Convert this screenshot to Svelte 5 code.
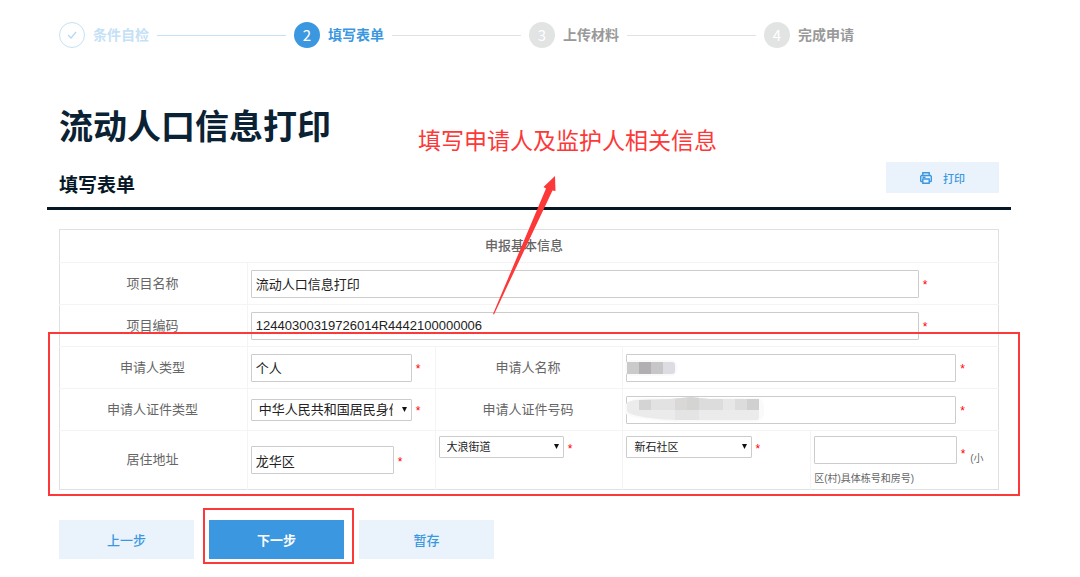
<script>
  const steps = [
    { no: 1, label: '条件自检', state: 'done' },
    { no: 2, label: '填写表单', state: 'current' },
    { no: 3, label: '上传材料', state: 'todo' },
    { no: 4, label: '完成申请', state: 'todo' }
  ];

  const idTypes = ['中华人民共和国居民身份证', '护照'];
  const streets = ['大浪街道', '龙华街道'];
  const communities = ['新石社区', '大浪社区'];

  let form = $state({
    name: '流动人口信息打印',
    code: '12440300319726014R4442100000006',
    type: '个人',
    applicant: '',
    idType: idTypes[0],
    idNumber: '',
    district: '龙华区',
    street: streets[0],
    community: communities[0],
    room: ''
  });
</script>

{#snippet caret()}
  <svg class="caret" viewBox="0 0 6 6" aria-hidden="true"><path d="M0 0h6L3 6z" fill="#111" /></svg>
{/snippet}

<div class="page">
  <ol class="steps">
    {#each steps as step}
      <li class={step.state}>
        <span class="circle">
          {#if step.state === 'done'}
            <svg width="10" height="8" viewBox="0 0 10 8" aria-hidden="true">
              <path d="M1 4l3 3 5-6" fill="none" stroke="currentColor" stroke-width="1.2" />
            </svg>
          {:else}
            {step.no}
          {/if}
        </span>
        <span class="step-label">{step.label}</span>
      </li>
    {/each}
  </ol>

  <header>
    <h1>流动人口信息打印</h1>
    <div class="subhead">
      <h2>填写表单</h2>
      <button type="button" class="btn print">
        <svg width="12" height="12" viewBox="0 0 12 12" fill="none" stroke="currentColor" stroke-width="1.4" aria-hidden="true">
          <path d="M2.8 3.5V.8h6.4v2.7M2.8 9.5H1.2L.7 9V4.5l.8-1h9l.8 1V9l-.5.5H9.2" />
          <path d="M2.8 7h6.4v4.3H2.8zM2.5 5.3h3" />
        </svg>
        打印
      </button>
    </div>
  </header>

  <div class="table-wrapper">
    <table>
      <thead>
        <tr><th colspan="5">申报基本信息</th></tr>
      </thead>
      <tbody>
        <tr>
          <td class="label"><label for="name">项目名称</label></td>
          <td colspan="4">
            <div class="field"><input id="name" bind:value={form.name} /><i>*</i></div>
          </td>
        </tr>
        <tr>
          <td class="label"><label for="code">项目编码</label></td>
          <td colspan="4">
            <div class="field"><input id="code" bind:value={form.code} /><i>*</i></div>
          </td>
        </tr>
        <tr>
          <td class="label"><label for="type">申请人类型</label></td>
          <td>
            <div class="field"><input id="type" bind:value={form.type} /><i>*</i></div>
          </td>
          <td class="label"><label for="applicant">申请人名称</label></td>
          <td colspan="2">
            <div class="field">
              <input id="applicant" bind:value={form.applicant} /><i>*</i>
              <svg class="mask" width="54" height="16" viewBox="0 0 54 16" aria-hidden="true">
                <rect width="52" height="16" rx="6" fill="#fafafa" />
                <path d="M2 2h12v12H2z" fill="#cbcacb" />
                <path d="M14 2h12v12H14z" fill="#b1afb2" />
                <path d="M26 2h12v12H26z" fill="#c6c5c7" />
                <path d="M38 2h9q3 0 3 3v6q0 3-3 3h-9z" fill="#dddce2" />
              </svg>
            </div>
          </td>
        </tr>
        <tr>
          <td class="label"><label for="id-type">申请人证件类型</label></td>
          <td>
            <div class="field">
              <span class="select">
                <select id="id-type" bind:value={form.idType}>
                  {#each idTypes as item}<option>{item}</option>{/each}
                </select>
                {@render caret()}
              </span>
              <i>*</i>
            </div>
          </td>
          <td class="label"><label for="id-number">申请人证件号码</label></td>
          <td colspan="2">
            <div class="field">
              <input id="id-number" bind:value={form.idNumber} /><i>*</i>
              <svg class="mask" width="142" height="26" viewBox="0 0 142 26" aria-hidden="true">
                <defs>
                  <clipPath id="blob">
                    <path d="M2 6q5-3 12-3l32-1 20-2 18 2h50v19q0 2-4 2H50q-24-1-36-4Q3 17 2 14z" />
                  </clipPath>
                </defs>
                <path d="M0 8q4-6 15-7h118q6 2 6 8v9q-2 6-10 7H50Q4 22 0 16z" fill="#fafafa" />
                <g clip-path="url(#blob)">
                  <path d="M0 0h142v26H0z" fill="#ebebec" />
                  <path d="M2 0h12v13H2z" fill="#ececed" />
                  <path d="M14 0h12v13H14z" fill="#d5d4d5" />
                  <path d="M26 0h24v13H26z" fill="#e2e2e2" />
                  <path d="M50 0h12v13H50z" fill="#d9d8d7" />
                  <path d="M62 0h12v13H62z" fill="#d4d4d3" />
                  <path d="M74 0h24v13H74z" fill="#dcdcdc" />
                  <path d="M98 0h12v13H98z" fill="#e7e7e8" />
                  <path d="M110 0h12v13h-12z" fill="#dddcdd" />
                  <path d="M122 0h12v13h-12z" fill="#d1d0d1" />
                  <path d="M50 13h24v13H50z" fill="#e4e4e4" />
                </g>
              </svg>
            </div>
          </td>
        </tr>
        <tr class="address">
          <td class="label"><label for="district">居住地址</label></td>
          <td>
            <div class="field short"><input id="district" bind:value={form.district} /><i>*</i></div>
          </td>
          <td class="top">
            <div class="field small">
              <span class="select">
                <select aria-label="街道" bind:value={form.street}>
                  {#each streets as item}<option>{item}</option>{/each}
                </select>
                {@render caret()}
              </span>
              <i>*</i>
            </div>
          </td>
          <td class="top">
            <div class="field small">
              <span class="select">
                <select aria-label="社区" bind:value={form.community}>
                  {#each communities as item}<option>{item}</option>{/each}
                </select>
                {@render caret()}
              </span>
              <i>*</i>
            </div>
          </td>
          <td class="top hint">
            <input aria-label="小区(村)具体栋号和房号" bind:value={form.room} /><i>*</i>
            (小区(村)具体栋号和房号)
          </td>
        </tr>
      </tbody>
    </table>
    <div class="mark mark-rows"></div>
  </div>

  <div class="actions">
    <button type="button" class="btn">上一步</button>
    <div class="next">
      <button type="button" class="btn primary">下一步</button>
      <div class="mark mark-next"></div>
    </div>
    <button type="button" class="btn">暂存</button>
  </div>

  <p class="note">填写申请人及监护人相关信息</p>
  <svg class="arrow" width="64" height="140" viewBox="0 0 64 140" aria-hidden="true">
    <path d="M62 1L50.500 12L53 13.500L0 139L1 139.500L59.500 15.500L62.500 16z" fill="#fd3838" />
  </svg>
</div>

<style>
:global(body) {
  background: #fff;
}

.page {
  position: relative;
  padding: 22px 69px 19px 47px;
  font-family: "Liberation Sans", "Noto Sans CJK SC", sans-serif;
  font-size: 13px;
  color: #666;
}

.steps {
  display: grid;
  grid-template-columns: repeat(4, 1fr);
  margin: 0 12px;
  padding: 0;
  list-style: none;
}

.steps li {
  display: flex;
  align-items: center;
  gap: 8px;
  color: #999;
}

.steps li:not(:last-child)::after {
  content: '';
  flex: 1;
  height: 1px;
  margin-right: 8px;
  background: #e2e2e2;
}

.circle {
  display: flex;
  align-items: center;
  justify-content: center;
  box-sizing: border-box;
  width: 26px;
  height: 26px;
  border-radius: 50%;
  background: #e2e3e3;
  color: #fff;
  font-family: "Noto Sans CJK SC", sans-serif;
  font-size: 15px;
  line-height: 26px;
}

.step-label {
  font-size: 14px;
  font-weight: bold;
  line-height: 26px;
}

.steps .done {
  color: #c5e1f5;
}

.done .circle {
  border: 1px solid #c5e1f5;
  background: #fff;
  color: #b3d8f2;
}

.steps li.done:not(:last-child)::after {
  background: #c5e1f5;
}

.steps .current {
  color: #3b97e0;
}

.current .circle {
  background: #3b97e0;
}

h1 {
  margin: 54px 12px 0;
  font-size: 34px;
  line-height: 50px;
  color: #0a2233;
}

.subhead {
  display: flex;
  align-items: flex-start;
  justify-content: space-between;
  height: 55px;
  padding: 0 12px;
  border-bottom: 3px solid #061826;
}

h2 {
  margin: 19px 0 0;
  font-size: 19px;
  line-height: 30px;
  color: #061826;
}

.btn {
  width: 135px;
  height: 39px;
  padding: 0;
  border: 0;
  background: #eaf3fb;
  color: #3b97e0;
  font-family: inherit;
  font-size: 13px;
  font-weight: 500;
  cursor: pointer;
}

.btn.primary {
  background: #3b97e0;
  color: #fff;
  font-weight: bold;
}

.btn.print {
  display: flex;
  align-items: center;
  justify-content: center;
  gap: 11px;
  width: 113px;
  height: 31px;
  margin-top: 10px;
  font-size: 11px;
}

.table-wrapper {
  position: relative;
  margin: 19px 12px 0;
}

table {
  width: 100%;
  table-layout: fixed;
  border-collapse: collapse;
  border: 1px solid #e0e0e0;
}

th {
  box-sizing: border-box;
  height: 33px;
  padding: 0 10px 0 0;
  font-weight: 500;
  line-height: 18px;
}

td {
  box-sizing: border-box;
  height: 42px;
  padding: 0 5px 0 3px;
  border-top: 1px solid #f4f4f4;
  line-height: 18px;
}

td + td {
  border-left: 1px solid #f4f4f4;
}

.label {
  text-align: center;
}

.address td {
  height: 58px;
}

td.top {
  padding-top: 5px;
  vertical-align: top;
}

.field {
  position: relative;
  display: flex;
  align-items: center;
  gap: 4px;
}

input,
select {
  box-sizing: border-box;
  border: 1px solid #ccc;
  border-radius: 1px;
  background: #fff;
  color: #222;
  font-family: inherit;
  font-size: 13px;
}

input {
  width: 90%;
  height: 28px;
  padding: 0 4px;
}

.short input {
  width: 80%;
}

.select {
  position: relative;
  width: 90%;
}

.small .select {
  width: 70%;
}

select {
  display: block;
  width: 100%;
  height: 22px;
  padding: 0 18px 0 7px;
  appearance: none;
}

.small select {
  font-size: 11px;
}

.caret {
  position: absolute;
  top: 8px;
  right: 5px;
  width: 5px;
  height: 5px;
  pointer-events: none;
}

i {
  padding-top: 3px;
  color: #f00;
  font-size: 12px;
  font-style: normal;
  line-height: 14px;
}

td.hint {
  padding-right: 10px;
  font-size: 10px;
  line-height: 20px;
}

.hint input {
  width: 82%;
  margin-right: 4px;
  vertical-align: text-bottom;
}

.hint i {
  margin-right: 2px;
  vertical-align: super;
}

.mask {
  position: absolute;
  left: -1px;
  pointer-events: none;
}

.actions {
  display: flex;
  gap: 15px;
  margin: 30px 12px 0;
}

.next {
  position: relative;
}

.mark {
  position: absolute;
  border: 2px solid #fd3838;
  pointer-events: none;
}

.mark-rows {
  inset: 103px -21px -6px -11px;
}

.mark-next {
  inset: -12px -10px -5px -6px;
}

.note {
  position: absolute;
  top: 124px;
  left: 418px;
  margin: 0;
  color: #fd3838;
  font-size: 23px;
  line-height: 34px;
  white-space: nowrap;
}

.arrow {
  position: absolute;
  top: 175px;
  left: 493px;
  pointer-events: none;
}
</style>
